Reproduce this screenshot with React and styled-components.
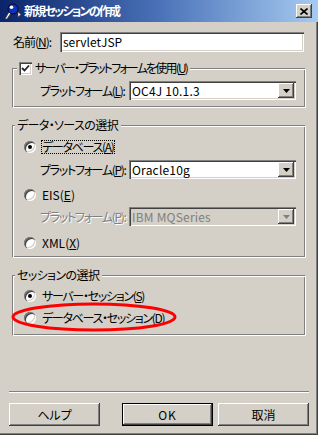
import React from "react";
import styled, { createGlobalStyle, css } from "styled-components";

const GlobalStyle = createGlobalStyle`
  html, body {
    margin: 0;
    padding: 0;
  }
  body {
    width: 318px;
    height: 435px;
    overflow: hidden;
    background: #d4d0c8;
    font-family: "Noto Sans CJK JP", "Liberation Sans", sans-serif;
    font-size: 12px;
    font-feature-settings: "palt";
    letter-spacing: -1px;
    color: #000;
  }
  * {
    box-sizing: border-box;
  }
`;

const sunken = css`
  box-shadow: inset 1px 1px 0 #808080, inset 2px 2px 0 #404040,
    inset -1px -1px 0 #ffffff, inset -2px -2px 0 #d4d0c8;
`;

const raised = css`
  box-shadow: inset -1px -1px 0 #404040, inset 1px 1px 0 #ffffff,
    inset -2px -2px 0 #808080, inset 2px 2px 0 #d4d0c8;
`;

const Window = styled.div`
  width: 318px;
  height: 435px;
  display: flex;
  flex-direction: column;
  background: #d4d0c8;
`;

const TitleBar = styled.div`
  height: 22px;
  flex: none;
  display: flex;
  align-items: center;
  padding: 0 6px 0 3px;
  background: linear-gradient(90deg, #0a246a 0%, #4a72b8 50%, #a6caf0 100%);
  color: #fff;
`;

const TitleText = styled.div`
  flex: 1;
  margin-left: 3px;
  font-size: 12px;
  font-weight: 700;
  line-height: 14px;
  letter-spacing: -1.8px;
  white-space: nowrap;
`;

const CloseButton = styled.div`
  width: 16px;
  height: 14px;
  background: #d4d0c8;
  display: flex;
  align-items: center;
  justify-content: center;
  ${raised};
`;

const Frame = styled.div`
  flex: 1;
  display: flex;
  flex-direction: column;
  padding: 10px 11px 8px 12px;
  border-right: 1px solid #404040;
  border-bottom: 1px solid #404040;
  box-shadow: inset -1px -1px 0 #808080;
`;

const NameRow = styled.div`
  display: flex;
  align-items: center;
  height: 20px;
  margin-right: 2px;
`;

const NameLabel = styled.span`
  width: 48px;
  flex: none;
  padding-left: 1px;
  line-height: 14px;
  white-space: nowrap;
`;

const TextField = styled.div`
  flex: 1;
  height: 20px;
  background: #fff;
  display: flex;
  align-items: center;
  padding: 0 3px;
  line-height: 14px;
  letter-spacing: 0;
  ${sunken};
`;

const GroupBox = styled.div`
  margin-top: ${(p) => p.$mt}px;
  display: flex;
  flex-direction: column;
`;

const GroupHeader = styled.div`
  display: flex;
  align-items: center;
  height: 14px;
`;

const HeaderCap = styled.div`
  width: ${(p) => p.$w}px;
  height: 7px;
  align-self: flex-end;
  border-top: 1px solid #808080;
  border-left: 1px solid #808080;
  box-shadow: inset 1px 1px 0 #fff;
`;

const Legend = styled.div`
  display: flex;
  align-items: center;
  gap: 3px;
  padding: 0 3px 0 2px;
  line-height: 14px;
  white-space: nowrap;
  letter-spacing: ${(p) => (p.$tight ? "-1.8px" : "-0.6px")};
`;

const HeaderLine = styled.div`
  flex: 1;
  height: 7px;
  align-self: flex-end;
  border-top: 1px solid #808080;
  border-right: 1px solid #fff;
  box-shadow: inset 0 1px 0 #fff, inset -1px 0 0 #808080;
`;

const GroupBody = styled.div`
  display: flex;
  flex-direction: column;
  padding: ${(p) => p.$pad};
  border-left: 1px solid #808080;
  border-right: 1px solid #fff;
  border-bottom: 1px solid #fff;
  box-shadow: inset 1px 0 0 #fff, inset -1px -1px 0 #808080;
`;

const Row = styled.div`
  position: relative;
  display: flex;
  align-items: center;
  height: ${(p) => p.$h || 14}px;
  margin-top: ${(p) => p.$mt || 0}px;
  padding-left: ${(p) => p.$indent || 0}px;
  line-height: 14px;
  white-space: nowrap;
`;

const FieldLabel = styled.span`
  width: 89px;
  flex: none;
  letter-spacing: -1.3px;
  color: ${(p) => (p.$disabled ? "#808080" : "#000")};
  text-shadow: ${(p) => (p.$disabled ? "1px 1px 0 #fff" : "none")};
`;

const Select = styled.div`
  flex: 1;
  height: 19px;
  display: flex;
  align-items: center;
  padding: 2px;
  background: ${(p) => (p.$disabled ? "#d4d0c8" : "#fff")};
  color: ${(p) => (p.$disabled ? "#808080" : "#000")};
  ${sunken};
`;

const SelectValue = styled.span`
  flex: 1;
  padding-left: 1px;
  letter-spacing: 0.2px;
`;

const DropButton = styled.div`
  width: 16px;
  height: 100%;
  background: #d4d0c8;
  display: flex;
  align-items: center;
  justify-content: center;
  ${raised};
`;

const Checkbox = styled.span`
  width: 13px;
  height: 13px;
  flex: none;
  background: #fff;
  display: flex;
  align-items: center;
  justify-content: center;
  ${sunken};
`;

const RadioCircle = styled.span`
  width: 12px;
  height: 12px;
  flex: none;
  border-radius: 50%;
  background: #fff;
  display: flex;
  align-items: center;
  justify-content: center;
  box-shadow: inset 1px 1px 0 #808080, inset 2px 2px 0 #404040,
    inset -1px -1px 0 #fff, inset -2px -2px 0 #d4d0c8;

  &::after {
    content: "";
    display: ${(p) => (p.$checked ? "block" : "none")};
    width: 4px;
    height: 4px;
    border-radius: 50%;
    background: #000;
  }
`;

const RadioText = styled.span`
  margin-left: 5px;
  padding: 0 1px;
  outline: ${(p) => (p.$focus ? "1px dotted #000" : "none")};
  outline-offset: -1px;
  line-height: 14px;
  letter-spacing: -1.3px;
`;

const Latin = styled.span`
  letter-spacing: 0;
`;

const Key = styled.span`
  text-decoration: underline;
  text-underline-offset: 1px;
`;

const Highlight = styled.svg`
  position: absolute;
  left: -14px;
  top: -10px;
  pointer-events: none;
  overflow: visible;
`;

const Footer = styled.div`
  margin: auto -3px 0;
  display: flex;
  flex-direction: column;
`;

const Separator = styled.div`
  height: 2px;
  border-top: 1px solid #808080;
  border-bottom: 1px solid #fff;
`;

const ButtonRow = styled.div`
  margin-top: 10px;
  display: flex;
  justify-content: space-between;
`;

const ButtonGroup = styled.div`
  display: flex;
  gap: 5px;
`;

const Button = styled.div`
  width: 91px;
  height: 23px;
  display: flex;
  align-items: center;
  justify-content: center;
  background: #d4d0c8;
  border: ${(p) => (p.$default ? "1px solid #000" : "none")};
  line-height: 14px;
  letter-spacing: ${(p) => (p.$default ? "1px" : "0")};
  ${raised};
`;

const AppIcon = () => (
  <svg width="18" height="18" viewBox="0 0 18 18">
    <path d="M2 17 L6 10 L8 11 L4 17 Z" fill="#fff" stroke="#404040" strokeWidth="0.8" />
    <circle cx="10" cy="7" r="5" fill="#1030c0" stroke="#000" strokeWidth="0.8" />
    <circle cx="8.5" cy="5.2" r="1.8" fill="#fff" />
    <path d="M15 10 L18 12.5 L15 15 Z" fill="#fff" stroke="#404040" strokeWidth="0.6" />
  </svg>
);

const CloseGlyph = () => (
  <svg width="8" height="7" viewBox="0 0 8 7">
    <path d="M0.5 0.5 L7.5 6.5 M7.5 0.5 L0.5 6.5" stroke="#000" strokeWidth="1.6" />
  </svg>
);

const Arrow = ({ disabled }) => (
  <svg width="7" height="4" viewBox="0 0 7 4">
    <polygon points="0,0 7,0 3.5,4" fill={disabled ? "#808080" : "#000"} />
  </svg>
);

const CheckMark = () => (
  <svg width="9" height="9" viewBox="0 0 9 9">
    <path d="M1 4 L3.5 6.5 L8 1.5" fill="none" stroke="#222" strokeWidth="1.8" />
  </svg>
);

const Dropdown = ({ value, disabled }) => (
  <Select $disabled={disabled}>
    <SelectValue>{value}</SelectValue>
    <DropButton>
      <Arrow disabled={disabled} />
    </DropButton>
  </Select>
);

const Radio = ({ checked, focus, children }) => (
  <>
    <RadioCircle $checked={checked} />
    <RadioText $focus={focus}>{children}</RadioText>
  </>
);

const App = () => {
  return (
    <>
      <GlobalStyle />
      <Window>
        <TitleBar>
          <AppIcon />
          <TitleText>新規セッションの作成</TitleText>
          <CloseButton>
            <CloseGlyph />
          </CloseButton>
        </TitleBar>

        <Frame>
          <NameRow>
            <NameLabel>
              名前(<Key>N</Key>):
            </NameLabel>
            <TextField>servletJSP</TextField>
          </NameRow>

          <GroupBox $mt={9}>
            <GroupHeader>
              <HeaderCap $w={5} />
              <Legend $tight>
                <Checkbox>
                  <CheckMark />
                </Checkbox>
                <span>
                  サーバー・プラットフォームを使用(<Key>U</Key>)
                </span>
              </Legend>
              <HeaderLine />
            </GroupHeader>
            <GroupBody $pad="6px 9px 7px 27px">
              <Row $h={19}>
                <FieldLabel>
                  プラットフォーム(<Key>L</Key>):
                </FieldLabel>
                <Dropdown value="OC4J 10.1.3" />
              </Row>
            </GroupBody>
          </GroupBox>

          <GroupBox $mt={10}>
            <GroupHeader>
              <HeaderCap $w={3} />
              <Legend>データ・ソースの選択</Legend>
              <HeaderLine />
            </GroupHeader>
            <GroupBody $pad="8px 9px 7px 11px">
              <Row>
                <Radio checked focus>
                  データベース(<Key>A</Key>)
                </Radio>
              </Row>
              <Row $h={19} $mt={6} $indent={16}>
                <FieldLabel>
                  プラットフォーム(<Key>P</Key>):
                </FieldLabel>
                <Dropdown value="Oracle10g" />
              </Row>
              <Row $mt={9}>
                <Radio>
                  <Latin>
                    EIS(<Key>E</Key>)
                  </Latin>
                </Radio>
              </Row>
              <Row $h={19} $mt={5} $indent={16}>
                <FieldLabel $disabled>
                  プラットフォーム(<Key>P</Key>):
                </FieldLabel>
                <Dropdown value="IBM MQSeries" disabled />
              </Row>
              <Row $mt={10}>
                <Radio>
                  <Latin>
                    XML(<Key>X</Key>)
                  </Latin>
                </Radio>
              </Row>
            </GroupBody>
          </GroupBox>

          <GroupBox $mt={10}>
            <GroupHeader>
              <HeaderCap $w={3} />
              <Legend>セッションの選択</Legend>
              <HeaderLine />
            </GroupHeader>
            <GroupBody $pad="7px 9px 10px 11px">
              <Row>
                <Radio checked>
                  サーバー・セッション(<Key>S</Key>)
                </Radio>
              </Row>
              <Row $mt={8}>
                <Radio>
                  データベース・セッション(<Key>D</Key>)
                </Radio>
                <Highlight width="168" height="32" viewBox="0 0 168 32">
                  <ellipse cx="84" cy="16" rx="81" ry="13" fill="none" stroke="#ff0000" strokeWidth="3" />
                </Highlight>
              </Row>
            </GroupBody>
          </GroupBox>

          <Footer>
            <Separator />
            <ButtonRow>
              <Button>ヘルプ</Button>
              <ButtonGroup>
                <Button $default>OK</Button>
                <Button>取消</Button>
              </ButtonGroup>
            </ButtonRow>
          </Footer>
        </Frame>
      </Window>
    </>
  );
};

export default App;
